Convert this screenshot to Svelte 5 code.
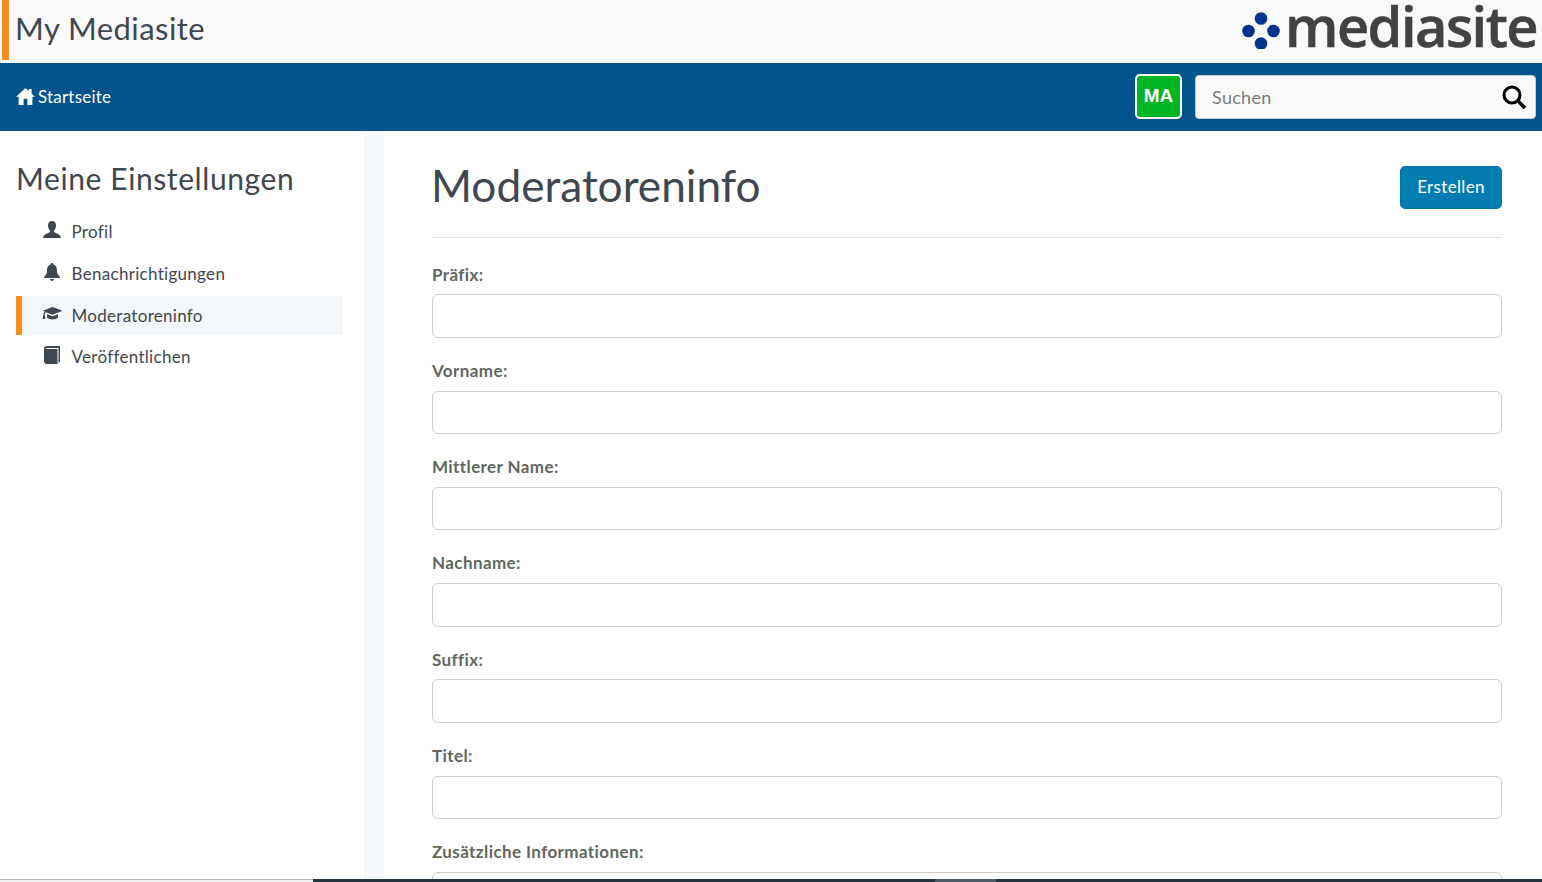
<script>
    const menu = [
        { label: 'Profil', icon: 'user' },
        { label: 'Benachrichtigungen', icon: 'bell' },
        { label: 'Moderatoreninfo', icon: 'cap', active: true },
        { label: 'Veröffentlichen', icon: 'book' }
    ];

    const fields = ['Präfix', 'Vorname', 'Mittlerer Name', 'Nachname', 'Suffix', 'Titel', 'Zusätzliche Informationen'];
</script>

<div class="page">
    <header class="top">
        <h1 class="brand">My Mediasite</h1>
        <div class="logo">
            <svg class="dots" viewBox="0 0 38 36.500" width="38" height="36.500" aria-hidden="true">
                <circle cx="19" cy="6.500" r="6.300" />
                <circle cx="6.500" cy="19" r="6.300" />
                <circle cx="31.500" cy="19" r="6.300" />
                <circle cx="19" cy="31.500" r="6.300" />
            </svg>
            <span class="logo-text">mediasite</span>
        </div>
    </header>

    <nav class="nav">
        <a class="home" href="#home">
            <svg viewBox="0 0 20 18" width="19" height="17" aria-hidden="true">
                <path d="M10 0 L13.500 3.200 V1 H16.500 V6 L20 9.300 H17.300 V18 H12 V11.500 H8 V18 H2.700 V9.300 H0 Z" fill="#fff" />
            </svg>
            Startseite
        </a>
        <div class="nav-right">
            <div class="avatar">MA</div>
            <div class="search">
                <input type="text" placeholder="Suchen" />
                <svg viewBox="0 0 26 26" width="26" height="26" aria-hidden="true">
                    <circle cx="11" cy="11" r="8" fill="none" stroke="#000" stroke-width="3" />
                    <path d="M17 17 L24 24" stroke="#000" stroke-width="3.600" />
                </svg>
            </div>
        </div>
    </nav>

    <div class="body">
        <aside class="side">
            <h2>Meine Einstellungen</h2>
            <ul>
                {#each menu as item}
                    <li class:active={item.active}>
                        <svg class="icon" viewBox="0 0 20 18" width="20" height="18" aria-hidden="true">
                            {#if item.icon === 'user'}
                                <path d="M10 0 C13 0 14 2.200 14 4.500 C14 7 13 8.500 12 9.500 V11 C14 12.500 18.500 13 19 17 H1 C1.500 13 6 12.500 8 11 V9.500 C7 8.500 6 7 6 4.500 C6 2.200 7 0 10 0 Z" />
                            {:else if item.icon === 'bell'}
                                <path d="M10 0 C11 0 11.500 .6 11.500 1.500 C14.500 2.500 15 5 15 8 C15 11 16.500 12.500 18 14 V15 H2 V14 C3.500 12.500 5 11 5 8 C5 5 5.500 2.500 8.500 1.500 C8.500 .6 9 0 10 0 Z M8 16 H12 C12 17.200 11 18 10 18 C9 18 8 17.200 8 16 Z" />
                            {:else if item.icon === 'cap'}
                                <path d="M10.500 2 L20.500 5.800 L10.500 9.800 L4 7.200 C3 7.800 2.800 8.500 2.800 9.500 L3.300 14 H.5 L1.500 9.300 C1.500 8 2.100 7 3 6.400 L.8 5.800 Z M5 9.200 L10.500 11.300 L16 9.200 V12.500 C14 15 7 15 5 12.500 Z" />
                            {:else}
                                <path d="M5 0 H17 C18 0 18 .6 18 1.500 V15 C18 16.500 17 17 16.500 17 V2.500 C16.500 2 16 2 15.500 2 H4.500 C3.500 2 3.500 3 4.500 3 H15.500 V18 H5 C3 18 2 17 2 15 V3 C2 1 3 0 5 0 Z" />
                            {/if}
                        </svg>
                        <span>{item.label}</span>
                    </li>
                {/each}
            </ul>
        </aside>
        <div class="gutter"></div>
        <main class="main">
            <div class="head">
                <h2>Moderatoreninfo</h2>
                <button type="button">Erstellen</button>
            </div>
            <form>
                {#each fields as field}
                    <div class="field">
                        <label for={field}>{field}:</label>
                        <input id={field} type="text" />
                    </div>
                {/each}
            </form>
        </main>
    </div>

    <div class="strip">
        <span class="thumb"></span>
    </div>
</div>

<style>
    :global(html), :global(body) {
        margin: 0;
        height: 100%;
        overflow: hidden;
    }

    .page {
        position: relative;
        height: 882px;
        overflow: hidden;
        background: #fff;
        font-family: Lato, "Open Sans", sans-serif;
        font-variant-ligatures: none;
        color: #3f4750;
    }

    .top {
        height: 63px;
        box-sizing: border-box;
        display: flex;
        justify-content: space-between;
        background: #f9f9f9;
        padding-bottom: 3px;
    }

    .brand {
        margin: 0 0 0 2px;
        padding: 8px 0 0 6px;
        border-left: 7px solid #f68d21;
        font-size: 31px;
        font-weight: 400;
        line-height: 41px;
        letter-spacing: .45px;
    }

    .logo {
        display: flex;
        align-items: flex-start;
        margin-right: 5px;
    }

    .dots {
        fill: #00338d;
        margin: 12px 5px 0 0;
    }

    .logo-text {
        font-family: "Open Sans", sans-serif;
        font-size: 56px;
        font-weight: 600;
        line-height: 50px;
        letter-spacing: -1.550px;
        -webkit-text-stroke: .6px #414244;
        color: #414244;
    }

    .nav {
        height: 68px;
        box-sizing: border-box;
        display: flex;
        align-items: center;
        justify-content: space-between;
        padding: 0 6px 2px 16px;
        background: #00548b;
    }

    .home {
        display: flex;
        align-items: center;
        gap: 3px;
        color: #fff;
        font-size: 17px;
        letter-spacing: .2px;
        text-decoration: none;
    }

    .nav-right {
        display: flex;
        align-items: center;
        gap: 13px;
    }

    .avatar {
        width: 47px;
        height: 45px;
        box-sizing: border-box;
        display: flex;
        align-items: center;
        justify-content: center;
        border: 2px solid #fff;
        border-radius: 5px;
        background: #00b624;
        color: #fff;
        font-family: "Liberation Sans", sans-serif;
        font-size: 19px;
        font-weight: 700;
    }

    .search {
        width: 341px;
        height: 44px;
        box-sizing: border-box;
        display: flex;
        align-items: center;
        padding-right: 8px;
        margin-top: 1px;
        border: 1px solid #ccc;
        border-radius: 4px;
        background: #f9f9f9;
    }

    .search input {
        flex: 1;
        min-width: 0;
        padding: 0 0 0 16px;
        border: 0;
        outline: 0;
        background: transparent;
        font: 18px Lato, sans-serif;
        letter-spacing: .3px;
        color: #333;
    }

    .search input::placeholder {
        color: #7b7b7b;
    }

    .body {
        display: flex;
        padding-top: 4px;
    }

    .side {
        width: 364px;
        box-sizing: border-box;
        padding: 0 21px 0 16px;
    }

    .side h2 {
        margin: 22px 0 0;
        font-size: 30px;
        font-weight: 400;
        line-height: 42px;
        letter-spacing: .6px;
    }

    .side ul {
        margin: 13.700px 0 0;
        padding: 0;
        list-style: none;
    }

    .side li {
        height: 39px;
        margin-bottom: 2.700px;
        box-sizing: border-box;
        display: flex;
        align-items: center;
        gap: 10px;
        padding: 0 0 1px 19.500px;
        border-left: 6px solid transparent;
        font-size: 17px;
        letter-spacing: .3px;
    }

    .side li.active {
        border-left-color: #f68d21;
        background: #f3f7fa;
    }

    .icon {
        fill: #3f4750;
        flex: none;
        margin-top: -3px;
    }

    .gutter {
        width: 20px;
        height: 800px;
        background: #f3f7fb;
    }

    .main {
        flex: 1;
        min-width: 0;
        padding: 0 40px 0 48px;
    }

    .head {
        height: 103px;
        box-sizing: border-box;
        display: flex;
        align-items: flex-start;
        justify-content: space-between;
        border-bottom: 1px solid #ddd;
    }

    .head h2 {
        margin: 22px 0 0 -1px;
        font-size: 44.200px;
        font-weight: 400;
        line-height: 56px;
    }

    .head button {
        width: 102px;
        height: 43px;
        margin-top: 31px;
        padding-bottom: 3px;
        border: 1px solid #0276a8;
        border-radius: 5px;
        background: #027cb1;
        color: #fff;
        font: 17px Lato, sans-serif;
        letter-spacing: .35px;
    }

    form {
        padding-top: 25.600px;
    }

    .field {
        height: 96.300px;
    }

    .field label {
        display: block;
        height: 30.700px;
        font-size: 17px;
        font-weight: 700;
        line-height: 21px;
        letter-spacing: .4px;
        color: #5f6760;
    }

    .field input {
        display: block;
        width: 100%;
        height: 43.600px;
        box-sizing: border-box;
        border: 1px solid #ccc;
        border-radius: 6px;
        background: #fff;
    }

    .strip {
        position: absolute;
        left: 0;
        right: 0;
        bottom: 0;
        height: 3px;
        background: #233640;
    }

    .strip::before {
        content: "";
        position: absolute;
        left: 0;
        top: 0;
        width: 313px;
        height: 3px;
        box-sizing: border-box;
        border-top: 1px solid #bbb;
        background: #f0f0f0;
    }

    .thumb {
        position: absolute;
        left: 935px;
        top: 0;
        width: 61px;
        height: 3px;
        background: #4b5a64;
    }
</style>
